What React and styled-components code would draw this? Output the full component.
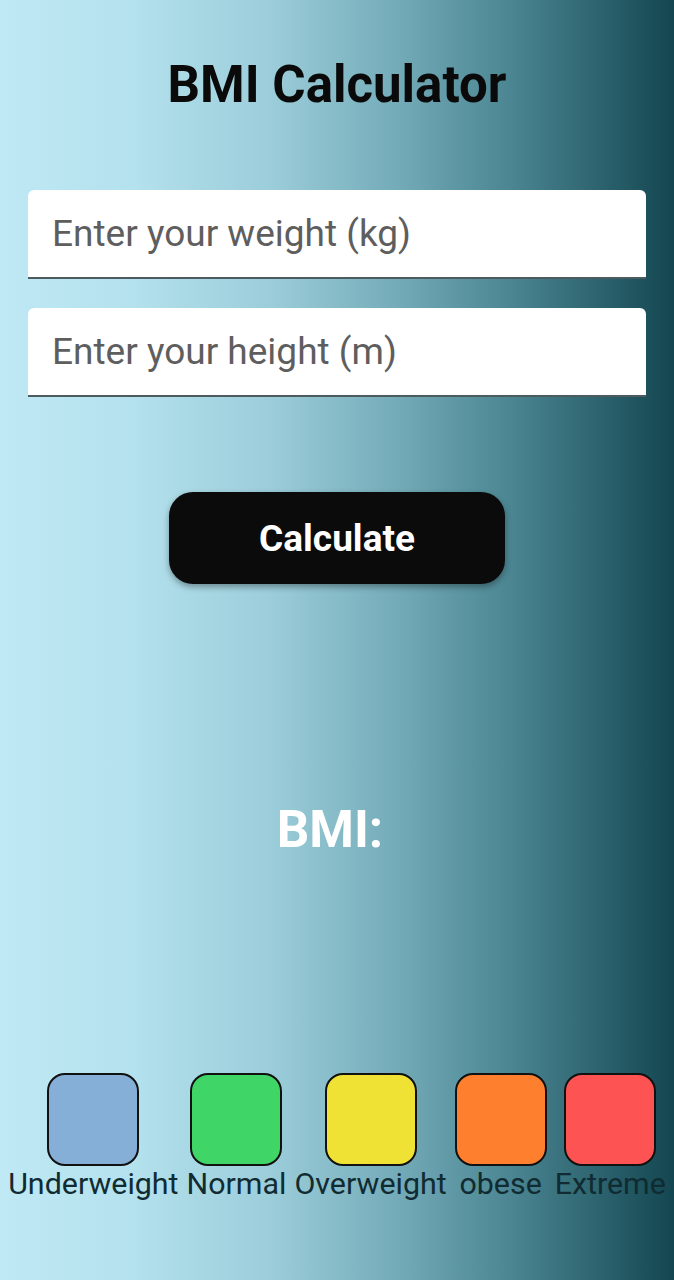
import React from 'react';
import styled, { createGlobalStyle } from 'styled-components';

const GlobalStyle = createGlobalStyle`
  html, body {
    margin: 0;
    padding: 0;
  }
  body {
    font-family: Roboto, "Noto Sans", "Liberation Sans", sans-serif;
  }
`;

const Screen = styled.div`
  width: 674px;
  height: 1280px;
  box-sizing: border-box;
  display: flex;
  flex-direction: column;
  align-items: center;
  padding-top: 53px;
  background: linear-gradient(
    to right,
    #bfe9f4 0%,
    #b3e1ed 20%,
    #9ccdda 40%,
    #76adba 58%,
    #4a8591 76%,
    #134651 100%
  );
`;

const Title = styled.h1`
  margin: 0;
  font-size: 51px;
  line-height: 64px;
  font-weight: 700;
  color: #0a0a0a;
`;

const Form = styled.div`
  width: 618px;
  margin-top: 73px;
  display: flex;
  flex-direction: column;
  gap: 29px;
`;

const Field = styled.input`
  box-sizing: border-box;
  width: 100%;
  height: 89px;
  padding: 0 24px;
  border: none;
  border-bottom: 2px solid #4d5a5e;
  border-radius: 6px 6px 0 0;
  background: #ffffff;
  font-family: Roboto, "Noto Sans", sans-serif;
  font-size: 37px;
  color: #333;
  outline: none;
  &::placeholder {
    color: #5e5e5e;
  }
`;

const CalcButton = styled.button`
  margin-top: 95px;
  width: 336px;
  height: 92px;
  border: none;
  border-radius: 24px;
  background: #0b0b0b;
  box-shadow: 0 3px 6px rgba(0, 0, 0, 0.35);
  color: #ffffff;
  font-family: Roboto, "Noto Sans", sans-serif;
  font-size: 37px;
  font-weight: 700;
`;

const Result = styled.div`
  margin-top: 216px;
  font-size: 51px;
  line-height: 60px;
  font-weight: 700;
  color: #ffffff;
  padding-right: 14px;
`;

const Legend = styled.div`
  margin-top: 213px;
  display: flex;
  justify-content: center;
  gap: 8px;
  width: 100%;
`;

const LegendItem = styled.div`
  display: flex;
  flex-direction: column;
  align-items: center;
`;

const Swatch = styled.div`
  box-sizing: border-box;
  width: 92px;
  height: 93px;
  border: 2px solid #111;
  border-radius: 18px;
  background: ${p => p.color};
`;

const LegendLabel = styled.span`
  font-size: 30.4px;
  line-height: 36px;
  color: #102b31;
  white-space: nowrap;
`;

const categories = [
  { label: 'Underweight', color: '#85afd7' },
  { label: 'Normal', color: '#3fd667' },
  { label: 'Overweight', color: '#efe234' },
  { label: 'obese', color: '#fe7f2d' },
  { label: 'Extreme', color: '#fd5353' },
];

export default function App() {
  return (
    <>
      <GlobalStyle />
      <Screen>
        <Title>BMI Calculator</Title>
        <Form>
          <Field placeholder="Enter your weight (kg)" />
          <Field placeholder="Enter your height (m)" />
        </Form>
        <CalcButton>Calculate</CalcButton>
        <Result>BMI:</Result>
        <Legend>
          {categories.map(c => (
            <LegendItem key={c.label}>
              <Swatch color={c.color} />
              <LegendLabel>{c.label}</LegendLabel>
            </LegendItem>
          ))}
        </Legend>
      </Screen>
    </>
  );
}
